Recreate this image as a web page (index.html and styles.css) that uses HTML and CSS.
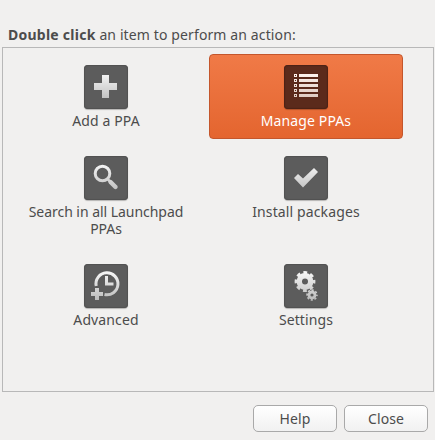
FILE: index.html
```html
<!DOCTYPE html>
<html lang="en">
<head>
<meta charset="UTF-8">
<meta name="viewport" content="width=device-width, initial-scale=1.0">
<title>PPA Manager</title>
<link rel="stylesheet" href="styles.css">
</head>
<body>
<svg class="defs" width="0" height="0" aria-hidden="true">
    <defs>
        <linearGradient id="silver" gradientUnits="userSpaceOnUse" x1="0" y1="8" x2="0" y2="36">
            <stop offset="0" stop-color="#f6f6f6"/>
            <stop offset="1" stop-color="#bcbcbc"/>
        </linearGradient>
        <linearGradient id="rows" gradientUnits="userSpaceOnUse" x1="0" y1="8" x2="0" y2="34">
            <stop offset="0" stop-color="#fff4ee"/>
            <stop offset="1" stop-color="#dcc8be"/>
        </linearGradient>
    </defs>
</svg>
<div class="window">
    <p class="hint"><b>Double click</b> <span>an item to perform an action:</span></p>
    <div class="icon-list">
        <div class="item">
            <svg class="icon" viewBox="0 0 44 44">
                <path fill="url(#silver)" d="M18 10h7v8h8v7h-8v8h-7v-8h-8v-7h8z"/>
            </svg>
            <span class="label">Add a PPA</span>
        </div>
        <div class="item selected">
            <svg class="icon" viewBox="0 0 44 44">
                <g fill="url(#rows)">
                    <path d="M15 9h19v3h-19zM15 14h19v3h-19zM15 19h19v3h-19zM15 24h19v3h-19zM15 29h19v3h-19z"/>
                    <path fill-rule="evenodd" d="M10 9h3v3h-3zM11 10v1h1v-1zM10 14h3v3h-3zM11 15v1h1v-1zM10 19h3v3h-3zM11 20v1h1v-1zM10 24h3v3h-3zM11 25v1h1v-1zM10 29h3v3h-3zM11 30v1h1v-1z"/>
                </g>
            </svg>
            <span class="label">Manage PPAs</span>
        </div>
        <div class="item">
            <svg class="icon" viewBox="0 0 44 44">
                <g fill="none" stroke="url(#silver)">
                    <circle cx="18.500" cy="17.500" r="7.300" stroke-width="3"/>
                    <path stroke-width="2.500" d="M23.500 23l3 3"/>
                    <path stroke-width="4.400" stroke-linecap="round" d="M26.500 26l5 5"/>
                </g>
            </svg>
            <span class="label search">Search in all Launchpad<br>PPAs</span>
        </div>
        <div class="item">
            <svg class="icon" viewBox="0 0 44 44">
                <path fill="url(#silver)" d="M10 22l4-4 5 4.500 11-10.500 4 4-15 15.500z"/>
            </svg>
            <span class="label">Install packages</span>
        </div>
        <div class="item">
            <svg class="icon" viewBox="0 0 44 44">
                <g fill="none" stroke="url(#silver)">
                    <path stroke-width="3" d="M12.200 22A11 11 0 1 1 20.500 30.500"/>
                    <path stroke-width="3" d="M22.500 12v8h7"/>
                </g>
                <path fill="url(#silver)" d="M11 24h4v4h4v4h-4v4h-4v-4h-4v-4h4z"/>
            </svg>
            <span class="label">Advanced</span>
        </div>
        <div class="item">
            <svg class="icon" viewBox="0 0 44 44">
                <g stroke="url(#silver)" fill="none">
                    <circle cx="21" cy="17.500" r="5.700" stroke-width="5.400"/>
                    <circle cx="21" cy="17.500" r="9" stroke-width="2.800" stroke-dasharray="3.800 3.270" stroke-dashoffset="1.900"/>
                    <circle cx="28" cy="31" r="3" stroke-width="2.800"/>
                    <circle cx="28" cy="31" r="4.900" stroke-width="1.700" stroke-dasharray="2.100 1.750" stroke-dashoffset="1"/>
                </g>
            </svg>
            <span class="label">Settings</span>
        </div>
    </div>
    <div class="actions">
        <button>Help</button>
        <button>Close</button>
    </div>
</div>
</body>
</html>
```

FILE: styles.css
```css
body {
    margin: 0;
    background-color: #f1f0ef;
    color: #4c4c4c;
    font-family: "Noto Sans", "Open Sans", sans-serif;
    font-size: 14px;
    line-height: 17px;
}

.defs {
    display: block;
}

.window {
    box-sizing: border-box;
    height: 440px;
    padding: 26px 1px 0 2px;
    overflow: hidden;
}

.hint {
    margin: 0 0 4px 6px;
    white-space: nowrap;
    letter-spacing: 0.12px;
}

.hint b {
    letter-spacing: 0.25px;
}

.icon-list {
    box-sizing: border-box;
    display: grid;
    grid-template-columns: 194px 194px;
    grid-template-rows: 85px 102px 85px;
    gap: 6px;
    height: 345px;
    padding: 6px;
    border: 1px solid #b8b8b8;
}

.item {
    box-sizing: border-box;
    display: flex;
    flex-direction: column;
    align-items: center;
    padding-top: 11px;
    border-radius: 4px;
}

.icon {
    width: 44px;
    height: 44px;
    border-radius: 4px;
    background-color: #5c5c5c;
    box-shadow: inset 0 0 1px 1px #525252, 0 1px 1px rgba(0, 0, 0, 0.25);
}

.label {
    margin-top: 3px;
    letter-spacing: 0.12px;
    text-align: center;
    white-space: nowrap;
}

.label.search {
    letter-spacing: -0.04px;
}

.selected {
    padding-top: 10px;
    border: 1px solid #c4562c;
    background: linear-gradient(#f07a47, #e4652f);
    color: #fff;
}

.selected .icon {
    background-color: #5b2a1b;
    box-shadow: inset 0 0 1px 1px #4c2216, 0 1px 1px rgba(0, 0, 0, 0.25);
}

.actions {
    display: flex;
    justify-content: flex-end;
    gap: 7px;
    padding: 13px 6px 0 0;
}

button {
    width: 84px;
    height: 27px;
    padding: 0;
    border: 1px solid #a9a9a9;
    border-radius: 5px;
    background: linear-gradient(#fff, #f1f1f1);
    color: #4c4c4c;
    font: inherit;
    letter-spacing: 0.1px;
}
```
